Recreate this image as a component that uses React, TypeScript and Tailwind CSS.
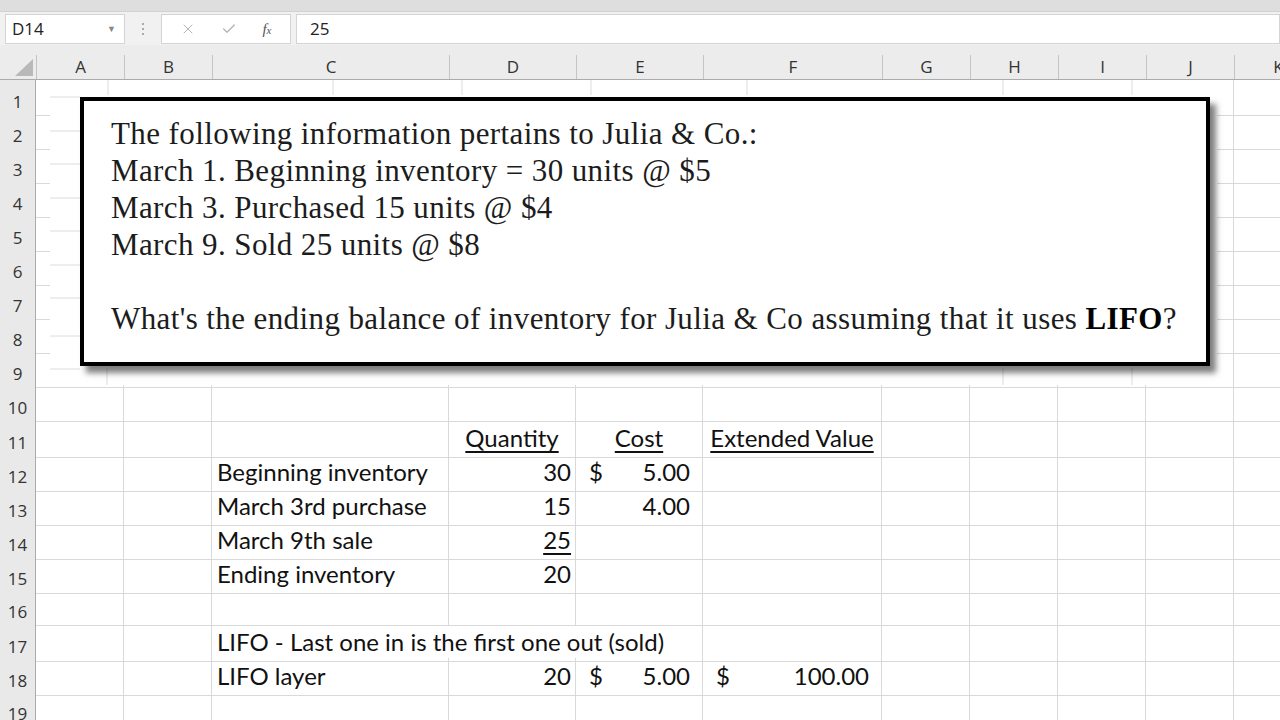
import { Check, X } from "lucide-react";

const cols = ["A", "B", "C", "D", "E", "F", "G", "H", "I", "J", "K"];
const gridCols = "grid grid-cols-[36px_88px_88px_237px_127px_127px_179px_88px_88px_88px_88px_88px]";

type Cell = { text?: string; align?: "left" | "right" | "center"; u?: boolean; acct?: [string, string]; span?: number };

const data: Record<number, Record<number, Cell>> = {
	11: {
		3: { text: "Quantity", align: "center", u: true },
		4: { text: "Cost", align: "center", u: true },
		5: { text: "Extended Value", align: "center", u: true },
	},
	12: { 2: { text: "Beginning inventory" }, 3: { text: "30", align: "right" }, 4: { acct: ["$", "5.00"] } },
	13: { 2: { text: "March 3rd purchase" }, 3: { text: "15", align: "right" }, 4: { acct: ["", "4.00"] } },
	14: { 2: { text: "March 9th sale" }, 3: { text: "25", align: "right", u: true } },
	15: { 2: { text: "Ending inventory" }, 3: { text: "20", align: "right" } },
	17: { 2: { text: "LIFO - Last one in is the first one out (sold)", span: 3 } },
	18: {
		2: { text: "LIFO layer" },
		3: { text: "20", align: "right" },
		4: { acct: ["$", "5.00"] },
		5: { acct: ["$", "100.00"] },
	},
};

function Row({ n }: { n: number }) {
	const row = data[n] || {};
	const cells = [];
	for (let c = 0; c < cols.length; c++) {
		const cell = row[c];
		if (cell?.span) {
			cells.push(
				<div key={c} className="col-span-3 border-r border-b border-[#d9d9d9] flex items-end pb-[1px] pl-[5px] whitespace-nowrap">
					{cell.text}
				</div>,
			);
			c += cell.span - 1;
			continue;
		}
		let inner = null;
		if (cell?.acct) {
			inner = (
				<div className="flex w-full justify-between pl-[13px] pr-[12px]">
					<span>{cell.acct[0]}</span>
					<span>{cell.acct[1]}</span>
				</div>
			);
		} else if (cell?.text) {
			const just = cell.align === "right" ? "justify-end pr-[4px]" : cell.align === "center" ? "justify-center" : "justify-start pl-[5px]";
			inner = (
				<div className={`flex w-full ${just}`}>
					<span className={cell.u ? "underline decoration-[2px] underline-offset-[4px]" : ""}>{cell.text}</span>
				</div>
			);
		}
		cells.push(
			<div key={c} className="border-r border-b border-[#d9d9d9] flex items-end pb-[1px] whitespace-nowrap">
				{inner}
			</div>,
		);
	}
	return (
		<div className={`${gridCols} h-[34px]`}>
			<div className="bg-[#e9e9e9] border-r border-r-[#ababab] border-b border-b-[#c8c8c8] flex items-center justify-center pt-[9px] text-[17px] text-[#333] font-['Open_Sans',sans-serif]">
				{n}
			</div>
			{cells}
		</div>
	);
}

export default function App() {
	const rows = Array.from({ length: 19 }, (_, i) => i + 1);
	return (
		<div className="relative w-[1280px] h-[720px] overflow-hidden bg-white text-[#111] font-['Lato',sans-serif] text-[24px]">
			<div className="h-[12px] bg-[#dedede] border-b border-[#d2d2d2]" />
			<div className="h-[33px] bg-[#f1f1f1] flex items-center pt-[1px] font-['Open_Sans',sans-serif] text-[17px] text-[#222]">
				<div className="ml-[5px] w-[120px] h-[30px] bg-white border border-[#d4d4d4] flex items-center justify-between pl-[6px] pr-[8px]">
					<span>D14</span>
					<span className="text-[9px] text-[#888]">▼</span>
				</div>
				<div className="w-[36px] flex flex-col items-center gap-[3px]">
					<span className="w-[2px] h-[2px] bg-[#aaa]" />
					<span className="w-[2px] h-[2px] bg-[#aaa]" />
					<span className="w-[2px] h-[2px] bg-[#aaa]" />
				</div>
				<div className="w-[130px] h-[30px] bg-white border border-[#d4d4d4] flex items-center justify-around px-[6px]">
					<X className="w-[16px] h-[16px] text-[#b5b5b5]" strokeWidth={1.5} />
					<Check className="w-[16px] h-[16px] text-[#b5b5b5]" strokeWidth={2} />
					<span className="font-['Liberation_Serif',serif] italic text-[15px] text-[#555]">
						f<span className="text-[11px]">x</span>
					</span>
				</div>
				<div className="ml-[5px] flex-1 h-[30px] bg-white border border-[#d4d4d4] flex items-center pl-[13px]">25</div>
			</div>
			<div className={`${gridCols} h-[35px] bg-[#ececec] border-b border-[#ababab] items-end font-['Open_Sans',sans-serif] text-[17px] text-[#333]`}>
				<div className="h-[24px] flex items-end justify-end pr-[3px] pb-[3px]">
					<svg width="18" height="17" viewBox="0 0 18 17">
						<polygon points="18,0 18,17 0,17" fill="#b9b9b9" />
					</svg>
				</div>
				{cols.map((c) => (
					<div key={c} className="h-[24px] border-l border-[#c4c4c4] flex items-center justify-center">
						{c}
					</div>
				))}
			</div>
			{rows.map((n) => (
				<Row key={n} n={n} />
			))}

			<div className="absolute left-[50px] top-[80px] w-[1167px] h-[305px] bg-white">
				<svg className="absolute inset-0" width="1167" height="305">
					<g stroke="#dcdcdc" strokeWidth="1">
						{[17, 51, 84, 118, 151, 185, 218, 256, 289].map((y) => (
							<line key={y} x1="0" y1={y} x2="30" y2={y} />
						))}
						{[58, 283, 412, 541, 697, 953, 1082].map((x) => (
							<line key={x} x1={x} y1="0" x2={x} y2="15" />
						))}
						{[57, 953, 1082].map((x) => (
							<line key={"b" + x} x1={x} y1="288" x2={x} y2="305" />
						))}
					</g>
				</svg>
				<div className="relative ml-[30px] mt-[17px] w-[1130px] h-[269px] bg-white border-[4px] border-black shadow-[6px_7px_6px_rgba(0,0,0,0.5)] pl-[27px] pt-[14px] font-['Liberation_Serif',serif] text-[31px] tracking-[0.4px] leading-[37px] text-[#1c1c1c]">
					<div>The following information pertains to Julia &amp; Co.:</div>
					<div>March 1. Beginning inventory = 30 units @ $5</div>
					<div>March 3. Purchased 15 units @ $4</div>
					<div>March 9. Sold 25 units @ $8</div>
					<div>&nbsp;</div>
					<div>
						What's the ending balance of inventory for Julia &amp; Co assuming that it uses <span className="font-bold text-black">LIFO</span>?
					</div>
				</div>
			</div>
		</div>
	);
}
